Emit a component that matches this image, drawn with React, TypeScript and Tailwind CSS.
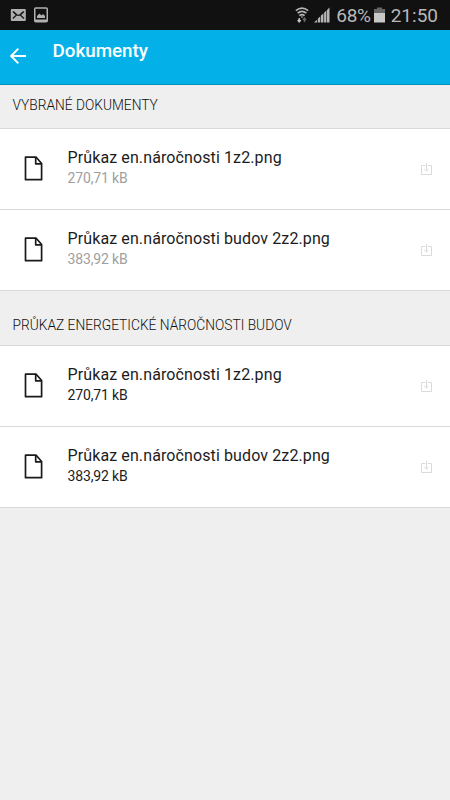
interface DocumentItem {
  name: string;
  size: string;
}

interface Section {
  title: string;
  muted: boolean;
  headerClass: string;
  items: DocumentItem[];
}

const sections: Section[] = [
  {
    title: 'VYBRANÉ DOKUMENTY',
    muted: true,
    headerClass: 'h-11 pt-2.5',
    items: [
      { name: 'Průkaz en.náročnosti 1z2.png', size: '270,71 kB' },
      { name: 'Průkaz en.náročnosti budov 2z2.png', size: '383,92 kB' },
    ],
  },
  {
    title: 'PRŮKAZ ENERGETICKÉ NÁROČNOSTI BUDOV',
    muted: false,
    headerClass: 'h-[55px] pt-6',
    items: [
      { name: 'Průkaz en.náročnosti 1z2.png', size: '270,71 kB' },
      { name: 'Průkaz en.náročnosti budov 2z2.png', size: '383,92 kB' },
    ],
  },
];

function MailIcon() {
  return (
    <svg width="16" height="12" viewBox="0 0 16 12" fill="none">
      <rect x="0.8" width="15" height="12" rx="1" fill="#b0b0b0" />
      <path d="M2.8 2.5L6.5 6L2.8 9.5M14 2.5L10.2 6L14 9.5M3.5 2.8L6.8 5.8Q8.4 7 10 5.8L13.3 2.8" stroke="#161616" strokeWidth="1.2" />
    </svg>
  );
}

function PictureIcon() {
  return (
    <svg width="14" height="16" viewBox="0 0 14 16" fill="none">
      <rect x="0.75" y="1.05" width="12.5" height="13.7" rx="1" stroke="#b0b0b0" strokeWidth="1.5" />
      <path d="M1 12.5H13V14.5H1Z" fill="#b0b0b0" />
      <path d="M3 11V9L5.5 6.5L7.5 8.5L9 7L11 9V11Z" fill="#b0b0b0" />
    </svg>
  );
}

function WifiIcon() {
  return (
    <svg width="14" height="16" viewBox="0 0 14 16" fill="none">
      <path d="M0.8 3.6Q7 -1.4 13.2 3.6M2.6 6.2Q7 2.6 11.4 6.2M4.4 8.7Q7 6.6 9.6 8.7" stroke="#b5b5b5" strokeWidth="1.6" />
      <path d="M5.5 9.5H8.5L7 11Z" fill="#b5b5b5" />
      <path d="M4.2 11V14.5M2.7 13L4.2 14.8L5.7 13" stroke="#c8c8c8" strokeWidth="1.4" />
      <path d="M9.5 15V11.5M8 13L9.5 11.2L11 13" stroke="#666" strokeWidth="1.4" />
    </svg>
  );
}

function SignalIcon() {
  return (
    <svg width="16" height="16" viewBox="0 0 16 16" fill="#b5b5b5">
      <path d="M0 15.5L3 12.7V15.5ZM3.8 11.7L6.3 9.3V15.5H3.8ZM7 8.6L9.4 6.4V15.5H7ZM10.1 5.7L12.4 3.5V15.5H10.1ZM13 2.9L15.5 0.5V15.5H13Z" />
    </svg>
  );
}

function BatteryIcon() {
  return (
    <svg width="11" height="16" viewBox="0 0 11 16">
      <path d="M3 0.5H8V2H11V6H0V2H3Z" fill="#666" />
      <path d="M0 6H11V15.5H0Z" fill="#c8c8c8" />
    </svg>
  );
}

function BackIcon() {
  return (
    <svg width="16" height="16" viewBox="0 0 16 16" fill="none" stroke="#fff" strokeWidth="1.9">
      <path d="M16 8H1.5M8.3 0.7L1.2 8L8.3 15.3" />
    </svg>
  );
}

function FileIcon() {
  return (
    <svg width="19" height="25" viewBox="0 0 19 25" fill="none" stroke="#1a1a1a" strokeWidth="1.7" strokeLinejoin="round">
      <path d="M1.5 1.2H12.2L17.6 7.5V23.7H1.5Z" />
      <path d="M11.7 1.5V7.8H17.5" />
    </svg>
  );
}

function DownloadIcon() {
  return (
    <svg width="11" height="13" viewBox="0 0 11 13" fill="none" stroke="#dadada">
      <path d="M4.3 2.5H0.5V11.5H10.5V2.5H6.7" />
      <path d="M5.5 0V7.5M3.3 6L5.5 8L7.7 6" />
    </svg>
  );
}

function DocumentRow({ item, muted }: { item: DocumentItem; muted: boolean }) {
  return (
    <li className="flex h-[81px] items-center border-b border-[#d9d9d9] bg-white pr-[18px] pl-6">
      <div className="pb-0.5">
        <FileIcon />
      </div>
      <div className="ml-[24.5px] flex-1 pb-1">
        <div className="text-base leading-[21px] tracking-[0.11px] text-[#1c1c1c]">{item.name}</div>
        <div
          className={`text-sm leading-5 tracking-[-0.15px] ${muted ? 'text-[#a0a0a0]' : 'text-[#1c1c1c]'}`}
        >
          {item.size}
        </div>
      </div>
      <DownloadIcon />
    </li>
  );
}

export default function App() {
  return (
    <div className="flex h-[800px] w-[450px] flex-col overflow-hidden bg-[#efefef] font-[Roboto,sans-serif]">
      {/* Status bar */}
      <div className="flex h-[30px] items-center bg-[#111] pr-3 pl-[10px] text-[#b8b8b8]">
        <MailIcon />
        <div className="ml-2">
          <PictureIcon />
        </div>
        <div className="ml-auto flex items-center">
          <WifiIcon />
          <div className="ml-[5px]">
            <SignalIcon />
          </div>
          <span className="ml-1.5 pt-0.5 text-[19px] leading-7 tracking-[-0.3px]">68%</span>
          <div className="ml-[3px]">
            <BatteryIcon />
          </div>
          <span className="ml-1.5 pt-0.5 text-[19px] leading-7">21:50</span>
        </div>
      </div>

      {/* Header */}
      <header className="flex h-[55px] border-b border-[#078fbd] bg-[#03b1e8] pl-[10px]">
        <div className="pt-[18px]">
          <BackIcon />
        </div>
        <h1 className="ml-[26.5px] pt-2 text-[18.8px] leading-[26px] font-medium text-white">Dokumenty</h1>
      </header>

      {sections.map((section) => (
        <section key={section.title}>
          <h2 className={`border-b border-[#d9d9d9] pl-[12.5px] text-[13.75px] leading-5 font-light text-[#111] ${section.headerClass}`}>
            {section.title}
          </h2>
          <ul>
            {section.items.map((item) => (
              <DocumentRow key={item.name} item={item} muted={section.muted} />
            ))}
          </ul>
        </section>
      ))}
    </div>
  );
}
